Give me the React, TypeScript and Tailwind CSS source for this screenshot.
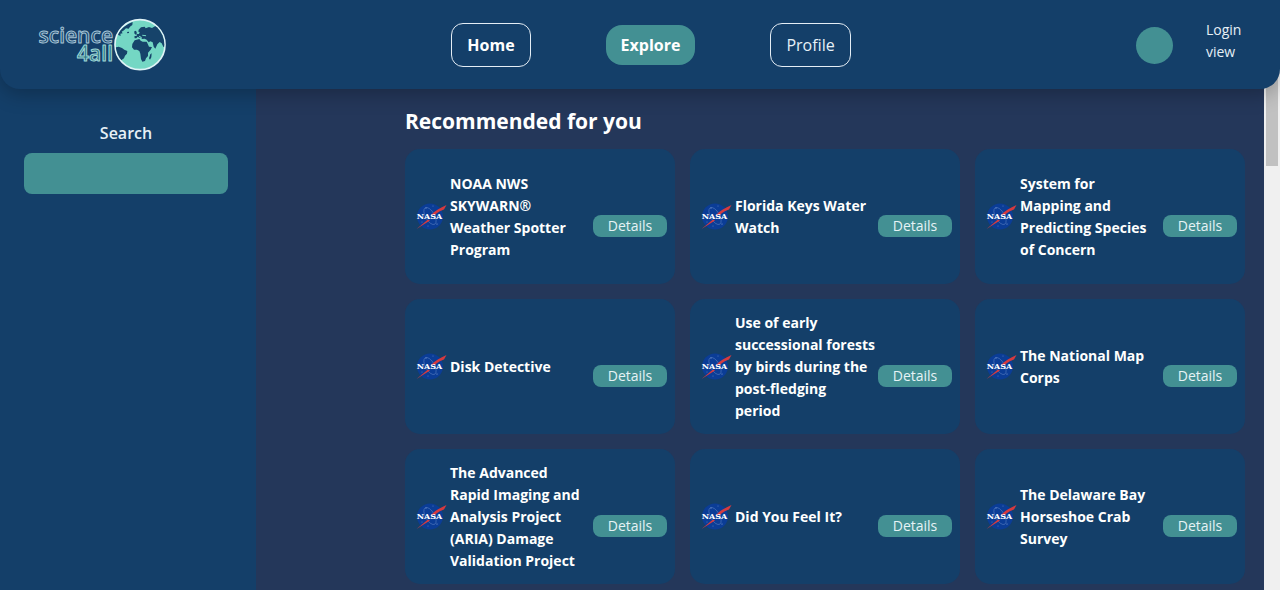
const projects = [
  'NOAA NWS SKYWARN® Weather Spotter Program',
  'Florida Keys Water Watch',
  'System for\nMapping and Predicting Species of Concern',
  'Disk Detective',
  'Use of early successional forests by birds during the post-fledging\nperiod',
  'The National Map Corps',
  'The Advanced\nRapid Imaging and Analysis Project (ARIA) Damage Validation Project',
  'Did You Feel It?',
  'The Delaware Bay Horseshoe Crab Survey',
];

function Logo() {
  return (
    <svg viewBox="0 0 130 56" className="h-14 w-[130px] shrink-0" role="img" aria-label="science 4all">
      <g
        fontFamily="'Open Sans', sans-serif"
        fontSize="21"
        fontWeight="600"
        textAnchor="end"
        strokeWidth="1"
        strokeLinejoin="round"
      >
        <text x="77" y="26" fill="#1d4a70" stroke="#a5c3d6">science</text>
        <text x="77" y="44" fill="#2f7684" stroke="#9fd6d6">4all</text>
      </g>
      <g transform="translate(72 -4) scale(.33333)">
        <clipPath id="globe">
          <circle cx="96" cy="95" r="73" />
        </clipPath>
        <circle cx="96" cy="95" r="75" fill="#74d7c4" stroke="#dff3f7" strokeWidth="5" />
        <g clipPath="url(#globe)" fill="#16436a">
          <path d="M30 62 38 50 50 40 62 32 74 27 73 36 66 41 62 47 54 46 48 52 41 56 44 61 37 62 38 69 31 66Z" />
          <path d="M20 104 32 101 42 105 49 110 58 114 57 122 51 128 48 136 40 142 35 151 28 148 20 126Z" />
          <path d="M92 50 99 43 110 41 113 46 123 42 132 45 142 39 154 44 180 62 178 108 166 101 161 91 155 87 148 94 142 107 137 101 134 88 127 85 122 88 116 80 110 77 102 78 99 73 94 74 89 71 85 76 80 76 79 70 87 68 85 63 93 63 95 57 91 56Z" />
          <path d="M79 55 84 53 87 61 82 65 79 61Z" />
          <path d="M57 57 63 56 63 60 58 61Z" />
          <path d="M80 82 94 78 98 83 104 86 116 86 119 92 123 101 132 102 128 110 120 119 120 129 114 136 111 144 103 146 99 138 97 122 94 114 87 110 78 110 72 103 73 93Z" />
          <path d="M127 124 131 121 130 133 126 140 123 136Z" />
        </g>
        <path d="M94 70 100 73M104 67 113 68" stroke="#74d7c4" strokeWidth="3" strokeLinecap="round" fill="none" />
      </g>
    </svg>
  );
}

function NasaBadge() {
  return (
    <svg viewBox="0 0 31 31" className="w-[31px] shrink-0" role="img" aria-label="NASA">
      <circle cx="14" cy="15.500" r="13" fill="#0b3d97" />
      <g fill="#9fb9e6">
        <circle cx="10" cy="7" r=".5" />
        <circle cx="17" cy="5" r=".4" />
        <circle cx="21" cy="23" r=".5" />
        <circle cx="12" cy="25" r=".4" />
        <circle cx="6" cy="21" r=".4" />
      </g>
      <ellipse cx="14" cy="15" rx="4.500" ry="9.500" transform="rotate(-30 14 15)" fill="none" stroke="#7f9fd8" strokeOpacity=".6" strokeWidth=".6" />
      <path d="M30.500 4C24 7 19 9.500 15 14L18.500 14C22 11 26 9 28 8.500ZM12 18.500 .5 28 14 19.500Z" fill="#d63a3f" />
      <text
        x="13.500"
        y="18"
        textAnchor="middle"
        fontFamily="'DejaVu Serif', serif"
        fontSize="8"
        fontWeight="700"
        fill="#fff"
      >
        NASA
      </text>
    </svg>
  );
}

function ProjectCard({ title }: { title: string }) {
  return (
    <li className="flex min-h-[135px] items-center rounded-[15px] bg-[#143f69] pr-2 pl-[11px]">
      <NasaBadge />
      <h2 className="ml-[3px] min-w-0 flex-1 text-sm leading-[22px] font-bold whitespace-pre-line">{title}</h2>
      <button
        type="button"
        className="mt-[18px] ml-0.5 h-[22px] w-[74px] shrink-0 rounded-lg bg-[#439093] text-sm leading-[22px] text-[#e6f3f6]"
      >
        Details
      </button>
    </li>
  );
}

export default function App() {
  return (
    <div className="flex h-screen flex-col overflow-hidden bg-[#24375a] font-['Open_Sans',sans-serif] text-white">
      <header className="relative z-10 flex shrink-0 items-center justify-between rounded-b-[20px] bg-[#143f69] px-9 pt-[17px] pb-4 shadow-[0_5px_20px_rgba(0,0,0,0.25)]">
        <Logo />
        <nav className="flex items-center gap-[75px]">
          <a href="#home" className="rounded-xl border border-[#e4edf5] px-[15px] py-[9px] text-base leading-6 font-bold">
            Home
          </a>
          <a href="#explore" aria-current="page" className="rounded-2xl bg-[#439093] px-[15px] py-2 text-base leading-6 font-bold">
            Explore
          </a>
          <a href="#profile" className="rounded-xl border border-[#e4edf5] px-[15px] py-[9px] text-base leading-6 text-[#e6f0f6]">
            Profile
          </a>
        </nav>
        <div className="flex items-center gap-[33px]">
          <span className="size-[37px] rounded-full bg-[#439093]" />
          <a href="#login" className="w-[38px] pb-2 text-sm leading-[22px] text-[#e6f0f6]">
            Login view
          </a>
        </div>
      </header>

      <div className="-mt-5 flex min-h-0 flex-1">
        <aside className="w-1/5 shrink-0 bg-[#143f69] pt-[52px] pr-7 pl-6">
          <label htmlFor="search" className="block text-center text-base leading-6 font-semibold text-[#e6f0f6]">
            Search
          </label>
          <input id="search" type="search" className="mt-2 h-[41px] w-full rounded-lg bg-[#439093] px-3 text-white outline-none" />
        </aside>
        <main className="min-w-0 flex-1 overflow-hidden pt-[35px] pr-[19px] pl-[149px]">
          <h1 className="text-[21px] leading-[34px] font-bold">Recommended for you</h1>
          <ul className="mt-[11px] grid grid-cols-3 gap-[15px]">
            {projects.map((title) => (
              <ProjectCard key={title} title={title} />
            ))}
          </ul>
        </main>
        <div className="w-4 shrink-0 bg-[#f0f0f0] px-0.5" aria-hidden="true">
          <div className="h-[97px] bg-[#c1c1c1]" />
        </div>
      </div>
    </div>
  );
}
